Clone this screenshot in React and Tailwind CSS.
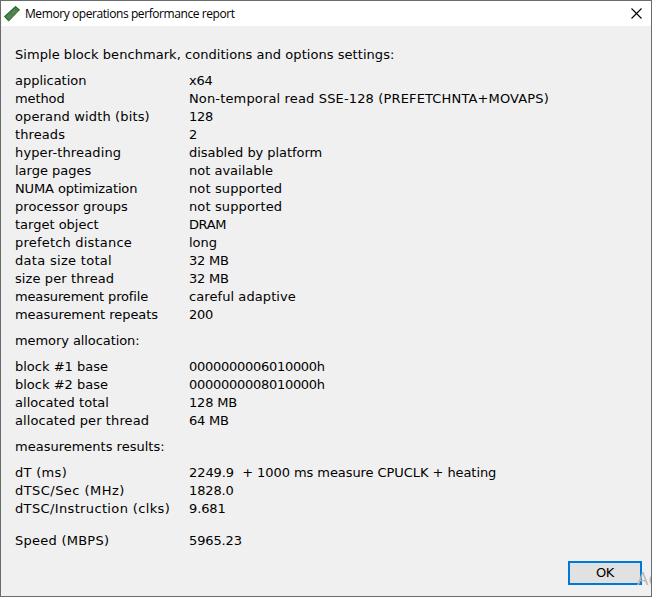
// Each row: name, value, name tracking, value tracking.
const settings = [
  ["application", "x64", "tracking-[-0.03px]", "tracking-[-0.2px]"],
  ["method", "Non-temporal read SSE-128 (PREFETCHNTA+MOVAPS)", "tracking-[-0.1px]", "tracking-[0.15px]"],
  ["operand width (bits)", "128", "tracking-[0.14px]", "tracking-[-0.25px]"],
  ["threads", "2", "tracking-[0.1px]", ""],
  ["hyper-threading", "disabled by platform", "tracking-[0.14px]", "tracking-[-0.05px]"],
  ["large pages", "not available", "", ""],
  ["NUMA optimization", "not supported", "tracking-[-0.12px]", "tracking-[0.12px]"],
  ["processor groups", "not supported", "tracking-[0.06px]", "tracking-[0.12px]"],
  ["target object", "DRAM", "", "tracking-[-0.4px]"],
  ["prefetch distance", "long", "tracking-[0.2px]", ""],
  ["data size total", "32 MB", "tracking-[0.3px]", "tracking-[-0.2px]"],
  ["size per thread", "32 MB", "tracking-[0.1px]", "tracking-[-0.2px]"],
  ["measurement profile", "careful adaptive", "tracking-[-0.15px]", "tracking-[0.08px]"],
  ["measurement repeats", "200", "tracking-[-0.05px]", "tracking-[-0.25px]"],
];

const allocation = [
  ["block #1 base", "0000000006010000h", "", "tracking-[-0.28px]"],
  ["block #2 base", "0000000008010000h", "", "tracking-[-0.28px]"],
  ["allocated total", "128 MB", "tracking-[0.03px]", "tracking-[-0.2px]"],
  ["allocated per thread", "64 MB", "tracking-[0.1px]", "tracking-[-0.2px]"],
];

const results = [
  ["dT (ms)", "2249.9  + 1000 ms measure CPUCLK + heating", "tracking-[0.3px]", "tracking-[-0.07px]"],
  ["dTSC/Sec (MHz)", "1828.0", "tracking-[0.45px]", "tracking-[-0.12px]"],
  ["dTSC/Instruction (clks)", "9.681", "tracking-[0.36px]", "tracking-[-0.12px]"],
];

const speed = [["Speed (MBPS)", "5965.23", "tracking-[0.25px]", "tracking-[-0.12px]"]];

function Rows({ items }) {
  return (
    <dl>
      {items.map(([name, value, nameTracking, valueTracking]) => (
        <div key={name} className="flex h-[18px] whitespace-pre">
          <dt className={`w-[174px] shrink-0 ${nameTracking}`}>{name}</dt>
          <dd className={valueTracking}>{value}</dd>
        </div>
      ))}
    </dl>
  );
}

function Section({ title, titleTracking, items }) {
  return (
    <section className="flex flex-col gap-2">
      <h2 className={titleTracking}>{title}</h2>
      <Rows items={items} />
    </section>
  );
}

function MemoryIcon() {
  return (
    <svg className="size-4 shrink-0" viewBox="0 0 16 16">
      <path d="M0 10.500 11.500 0 16 3.700 4.700 15.600Z" fill="#164a20" />
      <path d="M1 10.500 11.500 1 14.900 3.800 4.500 14.400Z" fill="#2f9238" />
      <path d="m3.200 10.300 2.300-2.100 2.300 1.900L5.500 12.500ZM7.200 6.600l3-2.700 2.300 1.900L9.500 8.600Z" fill="#77706f" />
      <path d="M4.700 14.700 15.400 3.800" stroke="#b3a84b" strokeWidth=".9" strokeDasharray="1.100 0.700" />
    </svg>
  );
}

export default function App() {
  return (
    <div className="flex h-[597px] w-[652px] flex-col overflow-hidden border border-[#6b6b6b] bg-[#f0f0f0] font-['DejaVu_Sans',Verdana,sans-serif] text-[13px] leading-[18px] text-black">
      <header className="flex h-[25px] shrink-0 items-center bg-white pl-[3px] pr-[9px]">
        <MemoryIcon />
        <h1 className="ml-[5px] flex-1 font-['Open_Sans',sans-serif] text-[12px] tracking-[-0.42px]">Memory operations performance report</h1>
        <svg className="size-[11px]" viewBox="0 0 11 11">
          <path d="M.5.5l10 10M10.500.5l-10 10" stroke="#000" strokeWidth="1.100" />
        </svg>
      </header>
      <main className="flex flex-1 flex-col gap-2 pl-[14px] pt-[20px]">
        <Section
          title="Simple block benchmark, conditions and options settings:"
          titleTracking="tracking-[0.05px]"
          items={settings}
        />
        <Section title="memory allocation:" titleTracking="tracking-[-0.08px]" items={allocation} />
        <Section title="measurements results:" titleTracking="" items={results} />
        <div className="mt-1.5">
          <Rows items={speed} />
        </div>
      </main>
      <footer className="relative flex h-[35px] shrink-0 items-start justify-end pr-[9px]">
        <button className="h-[24px] w-[74px] border-2 border-[#0078d7] bg-[#e1e1e1] tracking-[-0.3px]">OK</button>
        <span className="absolute left-[636px] top-[5px] whitespace-pre font-['Open_Sans',sans-serif] text-[18px] leading-6 text-[#b8b8b8]">Ac</span>
      </footer>
    </div>
  );
}
